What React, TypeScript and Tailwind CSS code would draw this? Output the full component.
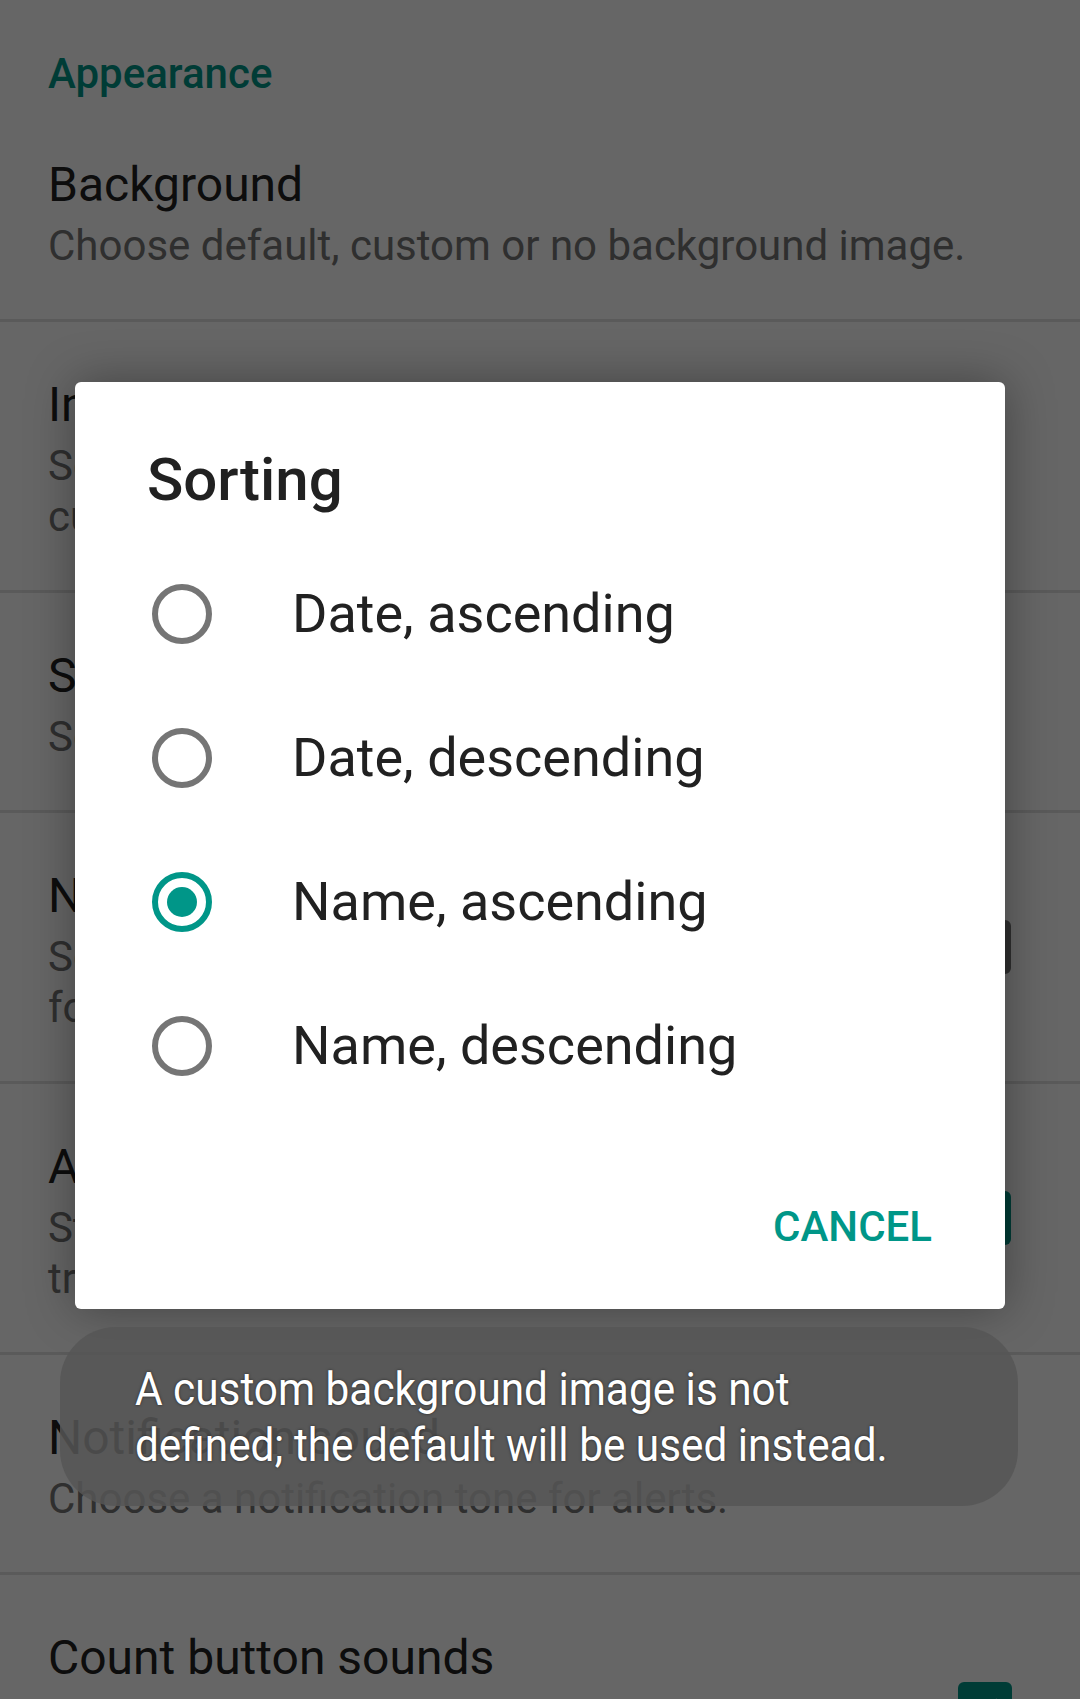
import React from 'react';

/**
 * Settings screen with the "Sorting" single-choice dialog open
 * and a toast message shown underneath it.
 */

type PrefProps = {
  title: string;
  lines?: string[];
  widget?: 'checked' | 'unchecked';
};

function Checkbox({ checked }: { checked: boolean }) {
  if (checked) {
    return (
      <div className="flex h-[54px] w-[54px] shrink-0 items-center justify-center rounded-[6px] bg-[#009688]">
        <svg width="42" height="42" viewBox="0 0 24 24" fill="none">
          <path d="M4.5 12.5l4.8 4.8L19.5 7" stroke="#ffffff" strokeWidth="3" />
        </svg>
      </div>
    );
  }
  return <div className="h-[54px] w-[54px] shrink-0 rounded-[6px] border-[6px] border-[#757575]" />;
}

function Pref({ title, lines = [], widget }: PrefProps) {
  return (
    <div className="flex items-center border-b-[3px] border-[#e0e0e0] pl-12 pr-[69px]">
      <div className="flex-1 pt-12 pb-12">
        <div className="text-[48px] leading-[70px] text-[#212121]">{title}</div>
        {lines.map((l) => (
          <div key={l} className="whitespace-nowrap text-[42px] leading-[51px] text-[#757575]">
            {l}
          </div>
        ))}
      </div>
      {widget && <Checkbox checked={widget === 'checked'} />}
    </div>
  );
}

const OPTIONS = ['Date, ascending', 'Date, descending', 'Name, ascending', 'Name, descending'];

export default function App() {
  const selected = 2;

  return (
    <div
      className="relative h-[1699px] w-full overflow-hidden bg-white"
      style={{ fontFamily: 'Roboto, "Noto Sans", sans-serif' }}
    >
      {/* settings list */}
      <div className="h-[102px] pl-12 pt-[44px] text-[42px] font-medium leading-[60px] text-[#009688]">
        Appearance
      </div>
      <Pref title="Background" lines={['Choose default, custom or no background image.']} />
      <Pref title="Initial value" lines={['Set the starting number for new counters, or', 'customize it later.']} />
      <Pref title="Sorting" lines={['Sort the counter list by date or by name.']} />
      <Pref
        title="Negative values"
        lines={['Set whether counters may go below zero, useful', 'for tracking balances.']}
        widget="unchecked"
      />
      <Pref
        title="Always on"
        lines={['Stay awake while counting so the screen keeps', 'track of every tap.']}
        widget="checked"
      />
      <Pref title="Notification sound" lines={['Choose a notification tone for alerts.']} />
      <Pref
        title="Count button sounds"
        lines={['Play a short click each time a counter is changed', 'by one of the buttons.']}
        widget="checked"
      />

      {/* dim */}
      <div className="absolute inset-0 bg-black/60" />

      {/* dialog */}
      <div className="absolute left-[75px] top-[382px] flex h-[927px] w-[930px] flex-col rounded-[6px] bg-white shadow-[0_0_48px_rgba(0,0,0,0.35)]">
        <div className="pl-[72px] pt-[68px] text-[60px] font-medium leading-[60px] text-[#212121]">Sorting</div>
        <div className="mt-8">
          {OPTIONS.map((o, i) => (
            <div key={o} className="flex h-[144px] items-center pl-[77px]">
              <div
                className={`flex h-[60px] w-[60px] shrink-0 items-center justify-center rounded-full border-[6px] ${
                  i === selected ? 'border-[#009688]' : 'border-[#757575]'
                }`}
              >
                {i === selected && <div className="h-[30px] w-[30px] rounded-full bg-[#009688]" />}
              </div>
              <span className="ml-[80px] text-[54px] leading-[64px] text-[#212121]">{o}</span>
            </div>
          ))}
        </div>
        <div className="flex justify-end pr-[73px] pt-12">
          <div className="flex h-[120px] items-center text-[42px] font-medium uppercase text-[#009688]">Cancel</div>
        </div>
      </div>

      {/* toast */}
      <div className="absolute left-[60px] top-[1327px] flex h-[179px] w-[958px] flex-col justify-center rounded-[56px] bg-[#565656]/85 pl-[75px]">
        <div
          className="origin-left scale-x-[0.92] whitespace-nowrap text-[46px] leading-[56px] text-white"
          style={{ textShadow: '0 0 3px rgba(0,0,0,0.6)' }}
        >
          A custom background image is not
          <br />
          defined; the default will be used instead.
        </div>
      </div>
    </div>
  );
}
